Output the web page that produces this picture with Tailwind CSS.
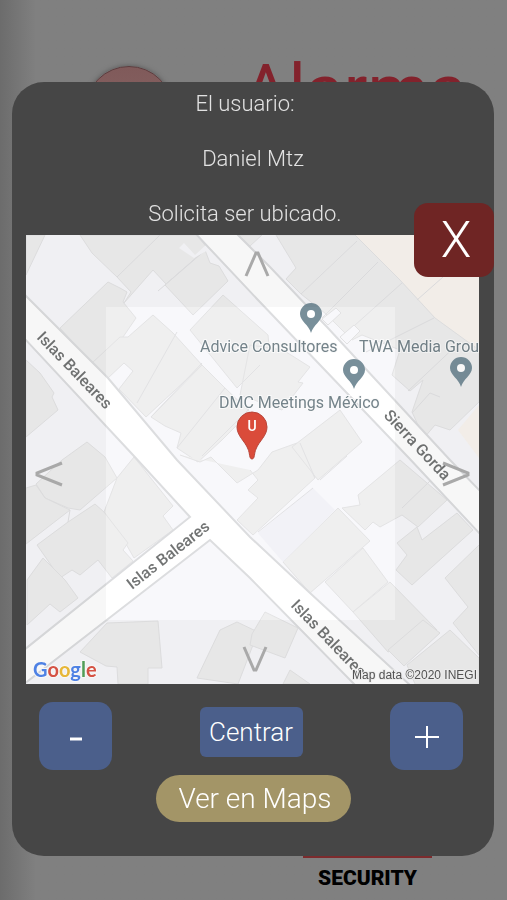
<!DOCTYPE html>
<html lang="es">
  <head>
    <meta charset="UTF-8" />
    <meta name="viewport" content="width=device-width, initial-scale=1.0" />
    <title>Alarma - Solicitud de ubicación</title>
    <script src="https://cdn.jsdelivr.net/npm/@tailwindcss/browser@4"></script>
  </head>
  <body class="bg-[#808080] font-['Roboto',sans-serif]">
    <!-- App screen behind the dialog -->
    <div
      class="min-h-screen flex flex-col justify-between bg-linear-to-r from-[#6c6c6c] to-[#808080] to-[36px]"
      aria-hidden="true"
    >
      <header class="flex items-start justify-between pt-[54px] pl-[85px] pr-10">
        <div
          class="mt-3 size-[88px] rounded-full border border-[#5c3c3e] bg-linear-to-b from-[#805a5a] to-[#8a6868] shadow-[0_0_5px_#555]"
        ></div>
        <p class="text-[70px] leading-[72px] text-[#83222c]">Alarma</p>
      </header>
      <footer class="flex flex-col items-end pr-[75px] pb-2">
        <div class="w-[129px] border-t-[12px] border-[#7c2b2d] text-center">
          <p class="pt-1.5 text-[21px] leading-7 font-black text-black">
            SECURITY
          </p>
        </div>
      </footer>
    </div>

    <!-- Location request dialog -->
    <div class="fixed inset-0 pt-[82px] pl-3 pr-[13px]">
      <section
        role="dialog"
        aria-label="Solicitud de ubicación"
        class="rounded-[32px] bg-[#464646] pb-[34px] text-[#e2e2e2]"
      >
        <div
          class="flex flex-col gap-[27px] pt-2 pb-[7px] pr-4 text-center text-[22px] leading-7 font-light"
        >
          <p>El usuario:</p>
          <p class="pl-4">Daniel Mtz</p>
          <p>Solicita ser ubicado.</p>
        </div>

        <div class="relative ml-[14px] mr-[15px]">
          <svg viewBox="26 235 453 449" class="block w-full bg-[#f8f8fb]">
            <path d="M355 235H479V352L432 317Z" fill="#faf5f0" />
            <path d="M479 405L458 430L479 458Z" fill="#faf5f0" />
            <!-- buildings -->
            <g fill="#efefef" stroke="#e4e4e5" stroke-width="1">
              <path d="M26 235H45L26 275Z" />
              <path d="M80 235L92 253L117 277L131 292L124 303L153 270L166 284L207 248L197 235Z" />
              <path d="M165 285L205 250L210 263L219 266L228 281L193 315Z" />
              <path d="M60 328L108 282L120 288L127 292L123 302L136 318L123 337L92 363Z" />
              <path d="M92 363L120 337L128 337L153 315L173 333L202 365L146 417L119 389L133 371L124 363L108 378Z" />
              <path d="M190 330L223 295L268 335L270 355L237 388Z" />
              <path d="M202 365L225 388L250 412L222 440L198 462L177 448L181 433L165 426L151 417Z" />
              <path d="M250 345L283 350L310 367L298 382L303 383L282 410L240 395Z" />
              <path d="M26 360L40 373L54 393L52 397L58 410L26 437Z" />
              <path d="M62 460L87 442L105 457L117 478L80 510L68 508L45 498L36 484Z" />
              <path d="M26 488L36 485L45 498L70 510L26 544Z" />
              <path d="M117 478L134 457L173 506L163 516L173 530L134 558L126 544L104 512Z" />
              <path d="M37 545L68 522L95 504L104 512L128 543L123 550L133 561L112 578L98 560L80 575L72 570L60 578Z" />
              <path d="M27 580L43 558L65 580L78 598L60 612L50 604L27 625Z" />
              <path d="M80 652L107 623L158 621L162 668L148 668V684H118L117 667L106 666Z" />
              <path d="M197 678L220 630L237 622L258 632L238 684Z" />
              <path d="M252 634L265 612L298 628L285 658L250 645Z" />
              <path d="M283 684L290 670L310 684Z" />
              <path d="M180 455L200 462L211 457L237 483L258 470L272 452L297 443L315 478L253 535L237 520L258 498L248 490L258 480L250 470" />
              <path d="M292 447L340 410L362 442L318 480Z" />
              <path d="M283 562L338 508L370 541L310 593Z" />
              <path d="M325 582L363 548L388 582L353 612Z" />
              <path d="M353 612L390 582L437 630L388 652Z" />
              <path d="M388 650L423 620L440 633L404 666Z" />
              <path d="M342 508L360 505L358 495L400 460L447 500L418 527L402 515L380 527L373 522L365 530Z" />
              <path d="M397 543L417 527L422 540L457 513L473 530L412 585L396 570L407 555Z" />
              <path d="M479 545L445 578L468 607L453 623L479 655" />
              <path d="M407 665L450 630L479 658V684H415Z" />
              <path d="M276 235H355L400 280L435 318L479 350V402L450 430L435 425L424 438L412 412L423 380L410 391L392 375L400 350L362 335L352 340L326 314L301 294L286 279L296 268Z" />
              <path d="M238 235L250 246L262 235Z" />
            </g>
            <path d="M258 533L313 488L335 510L283 562Z" fill="#f2f2f7" />
            <g fill="none" stroke="#e2e2e4" stroke-width="1">
              <path d="M158 291L223 235M117 277L160 235M137 403L177 332M151 417L202 363M177 448L225 388M237 388L260 365" />
              <path d="M301 294L357 241M322 318L378 262M345 334L402 283M366 352L434 318M408 391L460 342M417 300L443 277M412 413L430 393L440 397" />
              <path d="M202 456L250 408M300 443L315 478M313 488L258 532M320 480L347 456M402 508L430 481M68 522L70 510" />
            </g>
            <path d="M179 248L184 243L195 255L206 245L210 249L194 258Z" fill="#f8f8fb" />
            <path d="M322 319L336 308L341 313L328 325ZM340 337L354 325L360 331L347 344Z" fill="#f8f8fb" stroke="#e2e2e3" />
            <!-- streets -->
            <g fill="#ffffff" stroke="#dcdddf" stroke-width="2">
              <path d="M195 233L258 300L408 457L481 535V492L450 460L327 327L270 267L236 233Z" />
              <path d="M24 294L108 378L177 460L250 537L310 593L411 686H356L250 578L210 540L24 684V650L190 517L133 455L24 338Z" />
            </g>
            <!-- street names -->
            <g
              class="font-['Roboto'] font-medium"
              font-size="16"
              fill="#727474"
              stroke="#fff"
              stroke-width="2"
              paint-order="stroke"
            >
              <text transform="translate(36 338) rotate(46)">Islas Baleares</text>
              <text transform="translate(132 590) rotate(-38)">Islas Baleares</text>
              <text transform="translate(290 606) rotate(46)">Islas Baleares</text>
              <text transform="translate(383 416) rotate(47)">Sierra Gorda</text>
            </g>
            <!-- places -->
            <g
              class="font-['Roboto']"
              font-size="16"
              fill="#74838a"
              stroke="#fafafa"
              stroke-width="2"
              paint-order="stroke"
            >
              <text x="200" y="352">Advice Consultores</text>
              <text x="359" y="352">TWA Media Group</text>
              <text x="219" y="408">DMC Meetings México</text>
            </g>
            <g fill="#788f9a">
              <path d="M311 333C309 325 300 321 300 314A11 11 0 0 1 322 314C322 321 313 325 311 333Z" />
              <path d="M354 389C352 381 343 377 343 370A11 11 0 0 1 365 370C365 377 356 381 354 389Z" />
              <path d="M461 387C459 379 450 375 450 368A11 11 0 0 1 472 368C472 375 463 379 461 387Z" />
            </g>
            <g fill="#fff">
              <circle cx="311" cy="314" r="4" />
              <circle cx="354" cy="370" r="4" />
              <circle cx="461" cy="368" r="4" />
            </g>
            <path
              d="M252 459C249 459 250 453 248 449C245 441 237 436 237 427A15 15 0 0 1 267 427C267 436 259 441 256 449C254 453 255 459 252 459Z"
              fill="#da4b3a"
              stroke="#b8463a"
              stroke-width="1"
            />
            <text x="252" y="431" text-anchor="middle" class="font-['Roboto'] font-medium" font-size="14" fill="#fff">U</text>
            <text
              x="33"
              y="677"
              class="font-['Lato'] font-bold"
              font-size="20"
              stroke="#fff"
              stroke-width="2"
              paint-order="stroke"
            ><tspan fill="#5186ec">G</tspan><tspan fill="#dc5547">o</tspan><tspan fill="#efbd3a">o</tspan><tspan fill="#5186ec">g</tspan><tspan fill="#55a35b">l</tspan><tspan fill="#dc5547">e</tspan></text>
            <text
              x="477"
              y="679"
              text-anchor="end"
              class="font-['Liberation_Sans']"
              font-size="12"
              fill="#555"
              stroke="#f4f4f4"
              stroke-width="2"
              paint-order="stroke"
            >Map data ©2020 INEGI</text>
          </svg>

          <!-- pan controls along the map edges -->
          <div
            class="absolute inset-0 grid grid-cols-[80px_1fr_84px] grid-rows-[72px_1fr_64px] text-[#a9a9a9]"
          >
            <button
              type="button"
              aria-label="Mover arriba"
              class="col-span-3 flex justify-center bg-black/3 pt-4 pl-2"
            >
              <svg viewBox="0 0 26 26" class="size-[26px]" fill="none" stroke="currentColor" stroke-width="3">
                <path d="M2 25L12 2H14L24 25" />
              </svg>
            </button>
            <button
              type="button"
              aria-label="Mover a la izquierda"
              class="flex items-center bg-black/3 pt-5 pl-2"
            >
              <svg viewBox="0 0 30 26" class="h-[26px] w-[30px]" fill="none" stroke="currentColor" stroke-width="3">
                <path d="M28 2L3 12V14L28 24" />
              </svg>
            </button>
            <button
              type="button"
              aria-label="Mover a la derecha"
              class="col-start-3 flex items-center justify-end bg-black/3 pt-5 pr-2"
            >
              <svg viewBox="0 0 30 26" class="h-[26px] w-[30px]" fill="none" stroke="currentColor" stroke-width="3">
                <path d="M2 2L27 12V14L2 24" />
              </svg>
            </button>
            <button
              type="button"
              aria-label="Mover abajo"
              class="col-span-3 flex items-end justify-center bg-black/3 pb-3 pl-1"
            >
              <svg viewBox="0 0 26 26" class="size-[26px]" fill="none" stroke="currentColor" stroke-width="3">
                <path d="M2 1L12 24H14L24 1" />
              </svg>
            </button>
          </div>

          <button
            type="button"
            aria-label="Cerrar"
            class="absolute -top-8 -right-[15px] flex h-[74px] w-20 items-center justify-center rounded-[14px] bg-[#6f2524] pl-1 text-[50px] font-light text-white"
          >
            X
          </button>
        </div>

        <div class="flex items-start justify-between pt-[18px] pl-[27px] pr-[31px]">
          <button
            type="button"
            aria-label="Alejar"
            class="flex h-[68px] w-[73px] items-center justify-center rounded-[14px] bg-[#4b5f8b] text-white"
          >
            <svg viewBox="0 0 24 24" class="size-6" stroke="currentColor" stroke-width="3">
              <path d="M6 15H18" />
            </svg>
          </button>
          <button
            type="button"
            class="mt-[5px] h-[50px] w-[103px] rounded-md bg-[#4b5f8b] text-[26px] font-light text-white"
          >
            Centrar
          </button>
          <button
            type="button"
            aria-label="Acercar"
            class="flex h-[68px] w-[73px] items-center justify-center rounded-[14px] bg-[#4b5f8b] text-white"
          >
            <svg viewBox="0 0 24 24" class="size-6" stroke="currentColor" stroke-width="2">
              <path d="M0 13H24M12 2V24" />
            </svg>
          </button>
        </div>
        <div class="flex justify-center pt-[5px]">
          <button
            type="button"
            class="h-[47px] w-[195px] rounded-full bg-[#a39567] pl-1 text-[28px] font-light text-white"
          >
            Ver en Maps
          </button>
        </div>
      </section>
    </div>
  </body>
</html>
